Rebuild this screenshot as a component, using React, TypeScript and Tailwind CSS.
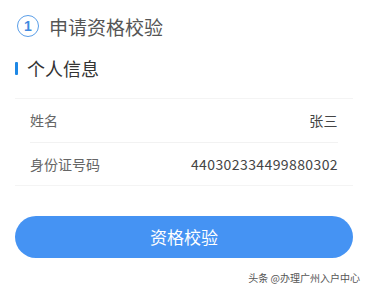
import React from 'react';

const rows = [
  { label: '姓名', value: '张三' },
  { label: '身份证号码', value: '440302334499880302' },
];

const App: React.FC = () => {
  return (
    <div
      className="w-[368px] h-[291px] bg-white overflow-hidden"
      style={{ fontFamily: '"Microsoft YaHei", "Noto Sans CJK SC", sans-serif' }}
    >
      {/* Step title */}
      <div className="flex items-center pl-[17px] pt-[15px] h-[37px]">
        <div
          className="w-[22px] h-[22px] rounded-full border-[1.5px] border-[#5a9ee8] flex items-center justify-center text-[#3f8ae0] text-[14px] font-bold leading-none"
          style={{ fontFamily: '"Liberation Sans", Arial, sans-serif' }}
        >
          1
        </div>
        <span className="ml-[10px] text-[19px] text-[#555] leading-none">申请资格校验</span>
      </div>

      {/* Section heading */}
      <div className="flex items-center pl-[15px] mt-[21px] h-[20px]">
        <div className="w-[3px] h-[13px] bg-[#1e88e5] rounded-[1px]" />
        <span className="ml-[9px] text-[18px] text-[#333] leading-none">个人信息</span>
      </div>

      {/* Info card */}
      <div className="mx-[15px] mt-[20px] border-y border-[#f4f4f4]">
        {rows.map((row, i) => (
          <div key={row.label} className={i > 0 ? 'border-t border-[#f2f2f2] mx-[15px]' : 'mx-[15px]'}>
            <div
              className={
                (i > 0 ? 'h-[42px]' : 'h-[43px]') +
                ' flex items-center justify-between text-[14px] text-[#666]'
              }
            >
              <span>{row.label}</span>
              <span className="text-[#444] tracking-[0.4px]">{row.value}</span>
            </div>
          </div>
        ))}
      </div>

      {/* Submit */}
      <div className="px-[15px] mt-[30px]">
        <button className="w-full h-[42px] rounded-full bg-[#4593f3] text-white text-[17px] flex items-center justify-center">
          资格校验
        </button>
      </div>

      <div className="flex justify-end pr-[8px] mt-[15px] text-[10px] text-[#555] leading-none">
        头条 @办理广州入户中心
      </div>
    </div>
  );
};

export default App;
